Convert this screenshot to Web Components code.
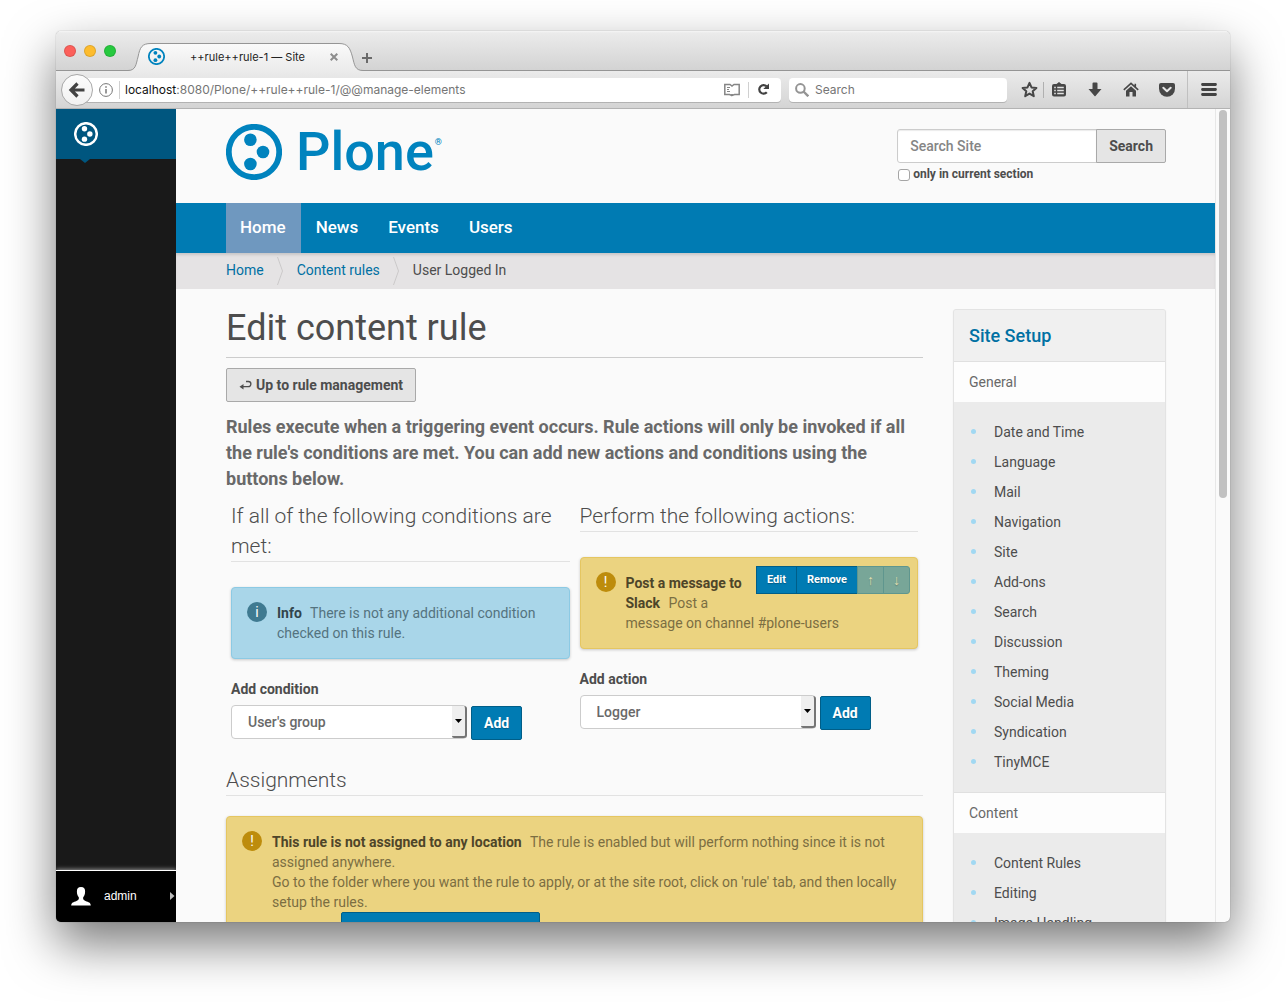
<!DOCTYPE html>
<html lang="en">
<head>
<meta charset="utf-8">
<meta name="viewport" content="width=device-width, initial-scale=1">
<title>++rule++rule-1 — Site</title>
<style>
  html, body { height: 100%; margin: 0; }
  body { box-sizing: border-box; padding: 31px 56px 80px; background: #fff; overflow: hidden; font: 14px/20px Roboto, sans-serif; color: #4d4d4d; }
</style>
</head>
<body>
<browser-window>
  <browser-tabs slot="chrome"></browser-tabs>
  <browser-toolbar slot="chrome"></browser-toolbar>
  <plone-toolbar slot="side"></plone-toolbar>
  <site-header></site-header>
  <site-nav></site-nav>
  <crumb-trail></crumb-trail>
  <rule-page></rule-page>
</browser-window>

<script>
const base = `<style>
  :host, *, *::before, *::after { box-sizing: border-box; }
  :host { display: block; }
  a { text-decoration: none; color: inherit; }
  ul, ol { list-style: none; margin: 0; padding: 0; }
  h1, h2, h3, p { margin: 0; }
  button, input, select { font: inherit; color: inherit; margin: 0; }
  svg { display: block; flex: none; }
  .btn { height: 34px; padding: 0 12px; font-weight: 700; line-height: 20px; border: 1px solid #a9a9a9; border-radius: 2px; background: #e5e5e5; color: #4d4d4d; white-space: nowrap; }
  .btn.primary { background: #007bb3; border-color: #005e88; color: #fff; text-shadow: 0 1px 1px rgba(0,0,0,.25); }
</style>`;

function define(name, html, setup) {
  customElements.define(name, class extends HTMLElement {
    constructor() {
      super();
      this.attachShadow({ mode: 'open' }).innerHTML = base + html;
    }
    connectedCallback() { if (setup) setup(this, this.shadowRoot); }
  });
}

define('browser-window', `<style>
  :host { height: 100%; display: flex; flex-direction: column; border-radius: 5px; overflow: hidden; background: #fafafa;
    box-shadow: 0 0 1px rgba(0,0,0,.5), 0 22px 50px rgba(0,0,0,.53); }
  .view { flex: 1; min-height: 0; display: flex; }
  main { flex: 1; min-width: 0; overflow: hidden; }
  .track { flex: none; width: 15px; border-left: 1px solid #e7e7e7; padding: 1px 3px; }
  .thumb { width: 8px; height: 388px; border-radius: 4px; background: #c1c1c1; }
</style>
<slot name="chrome"></slot>
<div class="view"><slot name="side"></slot><main><slot></slot></main><div class="track"><div class="thumb"></div></div></div>`);

define('plone-mark', `<style>
  :host { display: block; flex: none; width: var(--mark, 56px); height: var(--mark, 56px); }
  svg { width: 100%; height: 100%; }
</style>
<svg viewBox="0 0 56 56" aria-hidden="true"><circle cx="28" cy="28" r="25.2" fill="none" stroke="currentColor" stroke-width="5.8"/><g fill="currentColor"><circle cx="24.4" cy="15.8" r="6.3"/><circle cx="37" cy="28" r="6.3"/><circle cx="24.4" cy="40" r="6.3"/></g></svg>`);

define('browser-tabs', `<style>
  :host { display: flex; align-items: flex-end; height: 40px; flex: none; font: 11px/16px Inter, sans-serif; color: #222;
    background: linear-gradient(#f6f6f6, #ebebeb 2px, #d3d3d3); border-bottom: 1px solid #959595; }
  .lights { display: flex; gap: 8px; padding: 0 12px 0 8px; align-self: center; }
  .lights i { width: 12px; height: 12px; border-radius: 50%; border: 1px solid rgba(0,0,0,.12); }
  .tab { display: grid; width: 235px; height: 29px; margin-bottom: -1px; }
  .tab > * { grid-area: 1 / 1; }
  .label { display: flex; align-items: center; padding: 0 25px 0 20px; }
  plone-mark { --mark: 17px; color: #0083be; }
  .label span { flex: 1; text-align: center; white-space: nowrap; }
  .plus { margin: 0 0 6px -2px; }
</style>
<div class="lights"><i style="background:#fc605b"></i><i style="background:#fdbc2e"></i><i style="background:#27c93f"></i></div>
<div class="tab">
  <svg width="235" height="29" viewBox="0 0 235 29"><defs><linearGradient id="g" x1="0" x2="0" y1="0" y2="1"><stop offset="0" stop-color="#fafafa"/><stop offset="1" stop-color="#ebebeb"/></linearGradient></defs>
  <path d="M0 29V28.500C8 28.500 8 22 10 15C12 5 14 1.500 23 1.500H211C220 1.500 222 6 224.500 15C226.500 23 227 28.500 235 28.500V29Z" fill="url(#g)"/>
  <path d="M0 28.500C8 28.500 8 22 10 15C12 5 14 1.500 23 1.500H211C220 1.500 222 6 224.500 15C226.500 23 227 28.500 235 28.500" fill="none" stroke="#959595"/></svg>
  <div class="label"><plone-mark></plone-mark><span>++rule++rule-1 — Site</span>
    <svg width="8" height="8" viewBox="0 0 8 8" stroke="#8d8d8d" stroke-width="2"><path d="M.7.7l6.600 6.600M7.300.7L.7 7.300"/></svg></div>
</div>
<svg class="plus" width="12" height="12" viewBox="0 0 12 12" stroke="#6a6a6a" stroke-width="2"><path d="M6 1v10M1 6h10"/></svg>`);

define('browser-toolbar', `<style>
  :host { display: flex; align-items: center; height: 38px; flex: none; padding-left: 5px; font: 12px/18px Inter, sans-serif; color: #757575;
    background: linear-gradient(#ebebeb, #d4d4d4); border-bottom: 1px solid #b3b3b3; }
  button { background: none; border: 0; padding: 0; display: grid; place-items: center; width: 30px; height: 24px; color: #474747; }
  .back { position: relative; width: 32px; height: 32px; border-radius: 50%; border: 1px solid #a8a8a8; background: linear-gradient(#fcfcfc, #f1f1f1); flex: none; }
  .url, .find { display: flex; align-items: center; height: 24px; background: #fff; border-radius: 4px; box-shadow: 0 1px 0 rgba(0,0,0,.17); }
  .url { flex: 1; min-width: 0; margin: 0 8px 0 -12px; padding: 0 3px 0 18px; }
  .url [role=textbox] { flex: 1; white-space: nowrap; overflow: hidden; border-left: 1px solid #d0d0d0; margin-left: 6px; padding-left: 5px; outline: 0; }
  .url b { font-weight: 400; color: #111; }
  .reload { border-left: 1px solid #d0d0d0; height: 16px; margin-left: 8px; }
  .find { width: 218px; padding-left: 6px; gap: 6px; }
  .find input { border: 0; padding: 0; background: none; width: 100%; outline: 0; }
  .find input::placeholder { color: #757575; opacity: 1; }
  .tools { display: flex; align-items: center; gap: 6px; margin-right: 5px; }
  .star { margin-left: 7px; }
  .tools .list { border-left: 1px solid #b0b0b0; margin-left: -7px; height: 16px; width: 31px; }
  .menu { width: 43px; height: 37px; border-left: 1px solid #c0c0c0; }
</style>
<button class="back" aria-label="Back"><svg width="18" height="16" viewBox="0 0 18 16" fill="none" stroke="#424242" stroke-width="3.200"><path d="M16.500 8H4M9.500 1.500L3 8l6.500 6.500"/></svg></button>
<div class="url">
  <svg width="14" height="14" viewBox="0 0 14 14" fill="none" stroke="#777"><circle cx="7" cy="7" r="6.400"/><path d="M7 6v4.500M7 3.300v1.500" stroke-width="1.500"/></svg>
  <div role="textbox" aria-label="Address" tabindex="0"><b>localhost</b>:8080/Plone/++rule++rule-1/@@manage-elements</div>
  <svg width="16" height="14" viewBox="0 0 16 14" fill="none" stroke="#858585" stroke-width="1.500"><path d="M8 12.500L5.500 11.500H.8V1.500H6L8 3l2-1.500h5.200v10h-4.700L8 12.500V11"/><path d="M3 4.500h3M3 6.500h2M3 8.500h3" stroke-width="1"/></svg>
  <button class="reload" aria-label="Reload"><svg width="13" height="13" viewBox="0 0 13 13"><path d="M9.800 9.200A4.300 4.300 0 1 1 9.600 3.300" fill="none" stroke="#424242" stroke-width="2.200"/><path d="M12 .5V6H6.300Z" fill="#424242"/></svg></button>
</div>
<div class="find">
  <svg width="14" height="14" viewBox="0 0 14 14" fill="none" stroke="#949494" stroke-width="2"><circle cx="5.400" cy="5.400" r="4.300"/><path d="M8.500 8.500l4.800 4.800" stroke-width="2.400"/></svg>
  <input type="text" placeholder="Search" aria-label="Search the web">
</div>
<div class="tools">
  <button class="star" aria-label="Bookmark"><svg width="17" height="17" viewBox="0 0 17 17"><path d="M8.500 1.800l2 4.600 4.900.5-3.700 3.300 1.100 5-4.300-2.600-4.300 2.600 1.100-5L1.600 6.900l4.900-.5Z" fill="none" stroke="#474747" stroke-width="2" stroke-linejoin="round"/></svg></button>
  <button class="list" aria-label="Bookmarks list"><svg width="14" height="15" viewBox="0 0 14 15"><path d="M2 2h2.500L7 0l2.500 2H12a2 2 0 0 1 2 2v8.500a2 2 0 0 1-2 2H2a2 2 0 0 1-2-2V4a2 2 0 0 1 2-2Z" fill="#474747"/><path d="M2.200 5.500h1.600M5.200 5.500h6.600M2.200 8.500h1.600M5.200 8.500h6.600M2.200 11.500h1.600M5.200 11.500h6.600" stroke="#e2e2e2" stroke-width="1.500"/></svg></button>
  <button aria-label="Downloads"><svg width="14" height="15" viewBox="0 0 14 15"><path d="M4.500 1.500a1 1 0 0 1 1-1h3a1 1 0 0 1 1 1V7h4L7.500 14a.8.8 0 0 1-1 0L.5 7h4Z" fill="#474747"/></svg></button>
  <button aria-label="Home"><svg width="16" height="15" viewBox="0 0 16 15"><path d="M.8 7.800L8 1.400l7.200 6.400M12.300 1.800v3" fill="none" stroke="#474747" stroke-width="1.600"/><path d="M8 4.200l5 4.500V14.500H9.500V10H6.500v4.500H3V8.700Z" fill="#474747"/></svg></button>
  <button aria-label="Pocket"><svg width="16" height="14" viewBox="0 0 16 14"><path d="M2 0h12a2 2 0 0 1 2 2v3.800A8 8 0 0 1 0 5.800V2a2 2 0 0 1 2-2Z" fill="#474747"/><path d="M4.300 4.700L8 8.200l3.700-3.500" fill="none" stroke="#e6e6e6" stroke-width="2" stroke-linecap="round" stroke-linejoin="round"/></svg></button>
</div>
<button class="menu" aria-label="Menu"><svg width="16" height="13" viewBox="0 0 16 13" stroke="#424242" stroke-width="2.800" stroke-linecap="round"><path d="M1.500 1.500h13M1.500 6.500h13M1.500 11.500h13"/></svg></button>`);

define('plone-toolbar', `<style>
  :host { flex: none; width: 120px; display: flex; flex-direction: column; justify-content: space-between; background: #191919; color: #fff; font: 12px/18px "Liberation Sans", sans-serif; }
  .top { height: 50px; padding: 13px 18px; background: #00567f; position: relative; }
  .top::after { content: ""; position: absolute; left: 24px; top: 50px; border: solid transparent; border-width: 4px 5px 0; border-top-color: #00567f; }
  plone-mark { --mark: 24px; }
  .user { display: flex; align-items: center; gap: 13px; height: 52px; padding: 0 1px 1px 15px; background: #000; border-top: 1px solid #fff; box-shadow: 0 -1px 4px rgba(255,255,255,.5); }
  .user span { flex: 1; }
</style>
<a class="top" href="#"><plone-mark></plone-mark></a>
<a class="user" href="#"><svg width="20" height="19" viewBox="0 0 20 19"><path d="M10 0c3 0 4.300 2 4.100 4.800 0 2.500-.9 4.400-1.900 5.500-.4 2 .3 2.900 2.300 3.600C17.500 15 19.600 15.500 19.800 18.500H.2C.4 15.500 2.500 15 5.500 13.900c2-.7 2.700-1.600 2.300-3.600C6.800 9.200 5.900 7.300 5.900 4.800 5.700 2 7 0 10 0Z" fill="#fff"/></svg><span>admin</span><svg width="5" height="8" viewBox="0 0 5 8"><path d="M0 0l4.500 4L0 8Z" fill="#bbb"/></svg></a>`);

define('site-header', `<style>
  :host { display: flex; justify-content: space-between; height: 94px; padding: 15px 49px 0 50px; }
  .logo { display: flex; gap: 14px; color: #0083be; }
  .logo strong { font: 500 54px/56px Roboto, sans-serif; }
  .logo sup { font: 700 9px/36px Roboto, sans-serif; margin-left: -13px; }
  form { padding-top: 5px; }
  .row { display: flex; }
  .row input { width: 200px; height: 34px; padding: 6px 12px; border: 1px solid #ccc; border-radius: 3px 0 0 3px; background: #fff; font-weight: 500; box-shadow: inset 0 1px 1px rgba(0,0,0,.08); }
  .row input::placeholder { color: #858585; opacity: 1; }
  .row .btn { margin-left: -1px; border-radius: 0 2px 2px 0; }
  label { display: flex; align-items: center; gap: 3px; font: 700 12px/16px Roboto, sans-serif; margin-top: 3px; padding-left: 1px; }
  label input { appearance: none; width: 12px; height: 12px; border: 1px solid #a5a5a5; border-radius: 3px; background: #fff; margin-top: 2px; }
</style>
<a class="logo" href="#"><plone-mark></plone-mark><strong>Plone</strong><sup>®</sup></a>
<form><div class="row"><input type="text" placeholder="Search Site" aria-label="Search Site"><button type="button" class="btn">Search</button></div>
<label><input type="checkbox">only in current section</label></form>`);

define('site-nav', `<style>
  :host { background: #007bb3; padding-left: 50px; }
  nav { display: flex; }
  a { padding: 14px 15px 16px 14px; font-size: 17px; font-weight: 500; color: #fff; }
  a + a { padding-left: 15px; }
  a.on { background: #6f98bf; }
</style><nav><a class="on" href="#">Home</a><a href="#">News</a><a href="#">Events</a><a href="#">Users</a></nav>`);

define('crumb-trail', `<style>
  :host { background: #e5e3e4; height: 36px; padding: 4px 0 0 50px; box-shadow: inset 0 3px 3px -1px rgba(0,0,0,.13); }
  ol { display: flex; }
  li { display: flex; line-height: 27px; }
  a { color: #0070a3; }
  svg { margin: 0 14px 0 13px; }
</style><ol></ol>`, (el, root) => {
  const sep = '<svg width="6" height="28" viewBox="0 0 6 28" fill="none" stroke="#cbc9ca"><path d="M.5 0L5.500 14L.5 28"/></svg>';
  root.querySelector('ol').innerHTML = `<li><a href="#">Home</a>${sep}</li><li><a href="#">Content rules</a>${sep}</li><li>User Logged In</li>`;
});

define('status-message', `<style>
  :host { display: flow-root; background: #ebd380; border: 1px solid #e5c661; border-radius: 4px; padding: 15px; color: #7b6e42; box-shadow: 0 1px 3px rgba(0,0,0,.2); }
  :host([type=info]) { background: #a9d6e9; border-color: #8ccae4; color: #54737f; }
  .wrap { display: flex; gap: 10px; }
  .icon { flex: none; width: 20px; height: 20px; border-radius: 50%; background: #bd8c0c; color: #fff; text-align: center; font-weight: 400; line-height: 20px; margin-top: -1px; }
  :host([type=info]) .icon { background: #3f7a91; }
  .text { flex: 1; min-width: 0; }
  strong { color: #4e4529; margin-right: 5px; }
  :host([type=info]) strong { color: #33454d; }
</style>
<div class="wrap"><span class="icon"></span><div class="text"><slot name="tools"></slot><strong></strong> <slot></slot></div></div>`, (el, root) => {
  root.querySelector('.icon').textContent = el.getAttribute('type') === 'info' ? 'i' : '!';
  root.querySelector('strong').textContent = el.getAttribute('heading');
});

define('row-tools', `<style>
  :host { float: right; display: flex; margin: -7px -8px 0 5px; }
  button { height: 28px; padding: 0 10px; font: 700 11px/16px Roboto, sans-serif; color: #fff; background: #007bb3; border: 1px solid #005e88; margin-left: -1px; text-shadow: 0 1px 1px rgba(0,0,0,.25); }
  button:first-child { border-radius: 3px 0 0 3px; margin-left: 0; }
  button:last-child { border-radius: 0 3px 3px 0; }
  button:disabled { width: 27px; padding: 0; background: #78a698; border-color: #5f968e; color: #e3dfb0; font: 400 14px/16px "Liberation Sans", sans-serif; }
</style><button>Edit</button><button>Remove</button><button disabled aria-label="Move up">↑</button><button disabled aria-label="Move down">↓</button>`);

define('add-form', `<style>
  :host { margin-top: 20px; }
  label { display: block; font-weight: 700; margin-bottom: 6px; }
  .row { display: flex; gap: 4px; align-items: flex-start; }
  .pick { position: relative; width: 236px; max-width: 100%; }
  select { display: block; appearance: none; width: 100%; height: 34px; padding: 0 16px; border: 1px solid #ccc; border-radius: 4px; background: #fff; color: #696969; font-weight: 500; }
  .arrow { position: absolute; right: 0; top: 1px; bottom: 1px; width: 15px; display: grid; place-items: center; background: #efefef; border: solid #757575; border-width: 0 2px 2px 0; border-radius: 0 3px 3px 2px; pointer-events: none; }
  .btn { margin-top: 1px; }
</style>
<label for="kind"></label><div class="row"><div class="pick"><select id="kind"><option></option></select><span class="arrow"><svg width="7" height="4" viewBox="0 0 7 4"><path d="M0 0h7L3.500 4Z"/></svg></span></div><button class="btn primary">Add</button></div>`, (el, root) => {
  root.querySelector('label').textContent = el.getAttribute('label');
  root.querySelector('option').textContent = el.getAttribute('value');
});

define('setup-panel', `<style>
  :host { border: 1px solid #e3e3e3; border-radius: 3px; background: #ebebeb; overflow: hidden; box-shadow: 0 1px 2px rgba(0,0,0,.05); }
  h2 { padding: 16px 15px 15px; background: #f0f0f0; font: 500 18px/20px Roboto, sans-serif; color: #0070a3; border-bottom: 1px solid #e0e0e0; }
  h3 { padding: 10px 15px; height: 40px; background: #fdfdfd; font: 400 14px/20px Roboto, sans-serif; color: #696969; }
  ul { padding: 15px 15px 15px 17px; border-bottom: 1px solid #e0e0e0; }
  li { display: flex; align-items: center; gap: 18px; line-height: 30px; }
  li::before { content: ""; width: 5px; height: 5px; border-radius: 50%; background: #a1d8f2; margin-bottom: 2px; }
</style><h2><a href="#">Site Setup</a></h2><div></div>`, (el, root) => {
  const groups = [
    ['General', ['Date and Time', 'Language', 'Mail', 'Navigation', 'Site', 'Add-ons', 'Search', 'Discussion', 'Theming', 'Social Media', 'Syndication', 'TinyMCE']],
    ['Content', ['Content Rules', 'Editing', 'Image Handling']]
  ];
  root.querySelector('div').innerHTML = groups.map(([name, items]) =>
    `<h3>${name}</h3><ul>${items.map(i => `<li><a href="#">${i}</a></li>`).join('')}</ul>`).join('');
});

define('rule-page', `<style>
  :host { display: flex; align-items: flex-start; gap: 30px; padding: 20px 49px 0 50px; }
  article { flex: 1; min-width: 0; }
  setup-panel { flex: none; width: 213px; }
  h1 { font: 400 36px/39px Roboto, sans-serif; padding-bottom: 9px; border-bottom: 1px solid #ccc; }
  h2 { font: 300 21px/30px Roboto, sans-serif; border-bottom: 1px solid #e2e2e2; }
  .up { display: flex; align-items: center; gap: 4px; margin: 10px 0 12px; }
  .lead { font-size: 18px; line-height: 26px; font-weight: 700; color: #696969; }
  .cols { display: flex; align-items: flex-start; gap: 10px; padding: 9px 5px 25px; }
  .cols section { flex: 1; min-width: 0; }
  .cols status-message { margin-top: 25px; }
  .assign { margin-top: 20px; }
  .whole { display: block; width: 199px; margin-left: 69px; }
</style>
<article>
  <h1>Edit content rule</h1>
  <button class="btn up"><svg width="13" height="12" viewBox="0 0 13 12" fill="none" stroke="#4d4d4d" stroke-width="1.300"><path d="M7 2.500h2.300a2.600 2.600 0 0 1 0 5.200H2"/><path d="M4.500 5v5.500L.5 7.700Z" fill="#4d4d4d" stroke="none"/></svg>Up to rule management</button>
  <p class="lead">Rules execute when a triggering event occurs. Rule actions will only be invoked if all the rule's conditions are met. You can add new actions and conditions using the buttons below.</p>
  <div class="cols">
    <section><h2>If all of the following conditions are met:</h2>
      <status-message type="info" heading="Info">There is not any additional condition checked on this rule.</status-message>
      <add-form label="Add condition" value="User's group"></add-form></section>
    <section><h2>Perform the following actions:</h2>
      <status-message heading="Post a message to Slack"><row-tools slot="tools"></row-tools>Post a message on channel #plone-users</status-message>
      <add-form label="Add action" value="Logger"></add-form></section>
  </div>
  <h2>Assignments</h2>
  <status-message class="assign" heading="This rule is not assigned to any location">The rule is enabled but will perform nothing since it is not assigned anywhere.<br>Go to the folder where you want the rule to apply, or at the site root, click on 'rule' tab, and then locally setup the rules.<button class="btn primary whole" aria-label="Apply rule on the whole site"></button></status-message>
</article>
<setup-panel></setup-panel>`);
</script>
</body>
</html>
